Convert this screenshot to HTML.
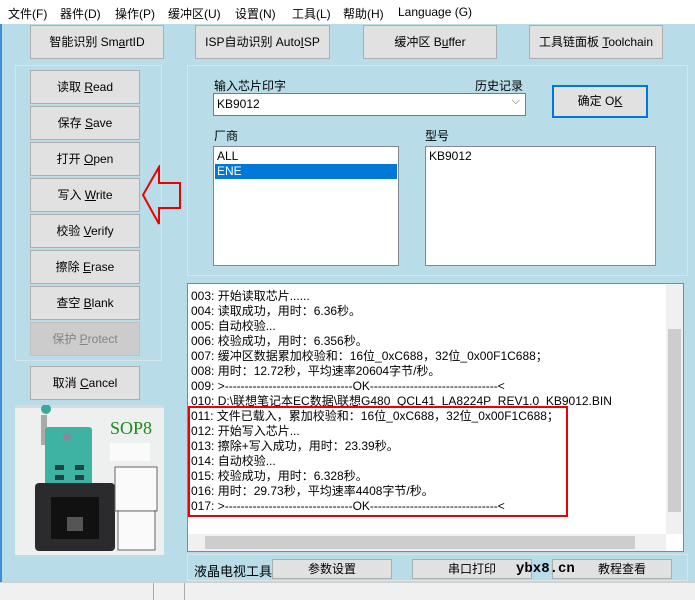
<!DOCTYPE html>
<html><head><meta charset="utf-8"><style>
*{box-sizing:border-box;margin:0;padding:0}
body{width:695px;height:600px;overflow:hidden;background:#b8dde8;font-family:"Liberation Sans","Noto Sans CJK SC",sans-serif;font-size:12px;color:#000;position:relative}
.a{position:absolute}
.menu{left:0;top:0;width:695px;height:24px;background:#fff}
.menu span{position:absolute;top:5px;font-size:12px}
.btn{position:absolute;background:#e1e1e1;border:1px solid #adadad;text-align:center;font-size:12px}
.frame{position:absolute;border:1px solid #d8e4e8}
.lb{position:absolute;background:#fff;border:1px solid #828790}
.log{font-size:12px;line-height:15px;white-space:nowrap}
u{text-decoration:underline}
</style></head><body>
<div class="a" style="left:0;top:24px;width:2px;height:558px;background:#3a8fd8"></div>
<div class="a menu">
<span style="left:8px">文件(F)</span><span style="left:60px">器件(D)</span><span style="left:115px">操作(P)</span><span style="left:168px">缓冲区(U)</span><span style="left:235px">设置(N)</span><span style="left:292px">工具(L)</span><span style="left:343px">帮助(H)</span><span style="left:398px">Language (G)</span>
</div>
<div class="btn" style="left:30px;top:25px;width:134px;height:34px;line-height:32px">智能识别 Sm<u>a</u>rtID</div>
<div class="btn" style="left:195px;top:25px;width:135px;height:34px;line-height:32px">ISP自动识别 Auto<u>I</u>SP</div>
<div class="btn" style="left:363px;top:25px;width:134px;height:34px;line-height:32px">缓冲区 B<u>u</u>ffer</div>
<div class="btn" style="left:529px;top:25px;width:134px;height:34px;line-height:32px">工具链面板 <u>T</u>oolchain</div>

<div class="frame" style="left:15px;top:65px;width:147px;height:296px"></div>
<div class="btn" style="left:30px;top:70px;width:110px;height:34px;line-height:32px">读取 <u>R</u>ead</div>
<div class="btn" style="left:30px;top:106px;width:110px;height:34px;line-height:32px">保存 <u>S</u>ave</div>
<div class="btn" style="left:30px;top:142px;width:110px;height:34px;line-height:32px">打开 <u>O</u>pen</div>
<div class="btn" style="left:30px;top:178px;width:110px;height:34px;line-height:32px">写入 <u>W</u>rite</div>
<div class="btn" style="left:30px;top:214px;width:110px;height:34px;line-height:32px">校验 <u>V</u>erify</div>
<div class="btn" style="left:30px;top:250px;width:110px;height:34px;line-height:32px">擦除 <u>E</u>rase</div>
<div class="btn" style="left:30px;top:286px;width:110px;height:34px;line-height:32px">查空 <u>B</u>lank</div>
<div class="btn" style="left:30px;top:322px;width:110px;height:34px;line-height:32px;background:#cccccc;border-color:#bfbfbf;color:#838383">保护 <u>P</u>rotect</div>
<div class="btn" style="left:30px;top:366px;width:110px;height:34px;line-height:32px">取消 <u>C</u>ancel</div>
<svg class="a" style="left:140px;top:165px" width="45" height="62"><polygon points="3,30 19,2 19,18 40,18 40,43 19,43 19,59" fill="none" stroke="#e00" stroke-width="2"/></svg>

<svg class="a" style="left:15px;top:405px" width="149" height="150">
<rect width="149" height="150" fill="#eef0ef"/>
<rect x="0" y="0" width="149" height="3" fill="#d8dcd8"/>
<circle cx="31" cy="4" r="5" fill="#3aa99a"/>
<rect x="26" y="10" width="6" height="30" fill="#aaa"/>
<rect x="30" y="22" width="47" height="68" rx="3" fill="#3fb3a3"/>
<circle cx="52" cy="32" r="4" fill="#889"/>
<rect x="40" y="60" width="9" height="5" fill="#244"/><rect x="60" y="60" width="9" height="5" fill="#244"/>
<rect x="40" y="70" width="9" height="5" fill="#244"/><rect x="60" y="70" width="9" height="5" fill="#244"/>
<rect x="20" y="78" width="80" height="68" rx="4" fill="#2b2b2e"/>
<rect x="36" y="92" width="48" height="42" fill="#111"/>
<rect x="52" y="112" width="16" height="14" fill="#555"/>
<rect x="95" y="38" width="40" height="18" fill="#fafafa"/>
<path d="M100 62h42v44h-42z M103 105v40h37v-40" fill="#fafafa" stroke="#666"/>
<text x="95" y="29" font-family="Liberation Serif,serif" font-size="18" fill="#1a8a1a">SOP8</text>
</svg>

<div class="frame" style="left:187px;top:65px;width:501px;height:211px"></div>
<div class="a" style="left:214px;top:77px">输入芯片印字</div>
<div class="a" style="left:475px;top:77px">历史记录</div>
<div class="lb" style="left:213px;top:93px;width:313px;height:23px;border-color:#7a7a7a"><span class="a" style="left:3px;top:3px">KB9012</span><span class="a" style="right:5px;top:1px;color:#555;font-size:11px">⌵</span></div>
<div class="btn" style="left:552px;top:85px;width:96px;height:33px;line-height:29px;border:2px solid #0078d7">确定 O<u>K</u></div>
<div class="a" style="left:214px;top:127px">厂商</div>
<div class="a" style="left:425px;top:127px">型号</div>
<div class="lb" style="left:213px;top:146px;width:186px;height:120px"><div style="padding:2px 0 0 3px;line-height:15px">ALL</div><div style="margin:0 1px;background:#0078d7;color:#fff;padding-left:2px;line-height:15px">ENE</div></div>
<div class="lb" style="left:425px;top:146px;width:231px;height:120px"><div style="padding:2px 0 0 3px;line-height:15px">KB9012</div></div>

<div class="lb" style="left:187px;top:283px;width:497px;height:269px">
<div class="a log" style="left:3px;top:5px">
003: 开始读取芯片......<br>004: 读取成功，用时：6.36秒。<br>005: 自动校验...<br>006: 校验成功，用时：6.356秒。<br>007: 缓冲区数据累加校验和：16位_0xC688，32位_0x00F1C688；<br>008: 用时：12.72秒，平均速率20604字节/秒。<br>009: &gt;--------------------------------OK--------------------------------&lt;<br>010: D:\联想笔记本EC数据\联想G480_QCL41_LA8224P_REV1.0_KB9012.BIN<br>011: 文件已载入，累加校验和：16位_0xC688，32位_0x00F1C688；<br>012: 开始写入芯片...<br>013: 擦除+写入成功，用时：23.39秒。<br>014: 自动校验...<br>015: 校验成功，用时：6.328秒。<br>016: 用时：29.73秒，平均速率4408字节/秒。<br>017: &gt;--------------------------------OK--------------------------------&lt;
</div>
<div class="a" style="left:0;top:122px;width:380px;height:111px;border:2px solid #e00"></div>
<div class="a" style="right:0;top:0;width:17px;height:250px;background:#f0f0f0"><div style="margin:45px 2px 0;height:183px;background:#cdcdcd"></div></div>
<div class="a" style="left:0;bottom:0;width:478px;height:17px;background:#f0f0f0"><div style="margin:2px 0 0 17px;width:430px;height:13px;background:#cdcdcd"></div></div>
</div>

<div class="frame" style="left:187px;top:554px;width:501px;height:27px"></div>
<div class="a" style="left:194px;top:561px;font-size:13px">液晶电视工具</div>
<div class="btn" style="left:272px;top:559px;width:120px;height:20px;line-height:18px">参数设置</div>
<div class="btn" style="left:412px;top:559px;width:120px;height:20px;line-height:18px">串口打印</div>
<div class="btn" style="left:552px;top:559px;width:120px;height:20px;line-height:18px">&nbsp;&nbsp;&nbsp;&nbsp;&nbsp;&nbsp;教程查看</div>
<div class="a" style="left:516px;top:561px;font-family:'Liberation Mono',monospace;font-size:14px;font-weight:bold">ybx8.cn</div>
<div class="a" style="left:0;top:582px;width:695px;height:18px;background:#f0f0f0;border-top:1px solid #d0d0d0"></div>
<div class="a" style="left:153px;top:583px;width:1px;height:17px;background:#aaa"></div>
<div class="a" style="left:184px;top:583px;width:1px;height:17px;background:#aaa"></div>
</body></html>
